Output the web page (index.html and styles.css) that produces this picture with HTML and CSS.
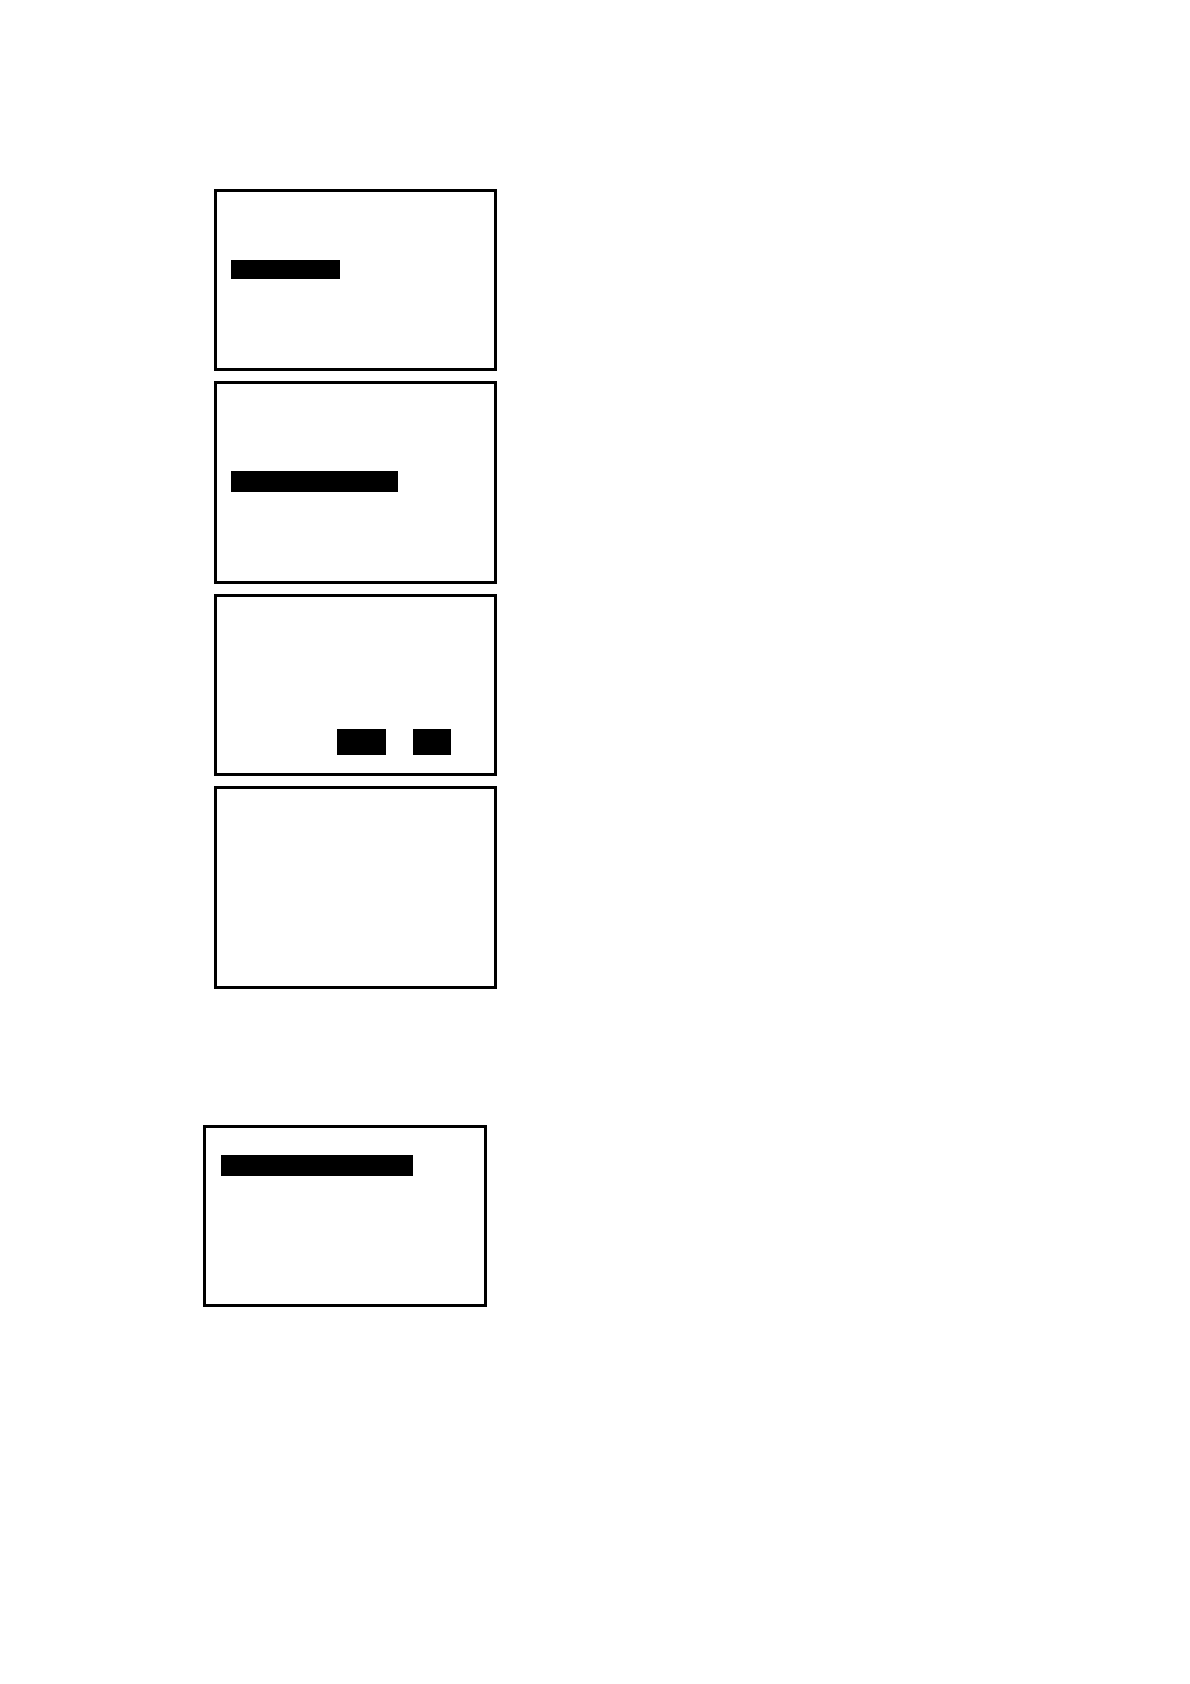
FILE: index.html
```html
<!DOCTYPE html>
<html lang="en">
<head>
<meta charset="utf-8">
<meta name="viewport" content="width=device-width, initial-scale=1">
<link rel="stylesheet" href="styles.css">
</head>
<body>
<main class="page">
  <section class="stack stack-indented">
    <div class="screen screen-second-row">
      <div class="bar bar-short"></div>
    </div>
    <div class="screen screen-tall screen-third-row">
      <div class="bar bar-medium"></div>
    </div>
    <div class="screen screen-choices">
      <div class="choice choice-wide"></div>
      <div class="choice"></div>
    </div>
    <div class="screen screen-tall"></div>
  </section>
  <section class="stack">
    <div class="screen screen-first-row">
      <div class="bar bar-long"></div>
    </div>
  </section>
</main>
</body>
</html>
```
FILE: styles.css
```css
* {
  box-sizing: border-box;
}

body {
  margin: 0;
  background: #fff;
  font-family: "Liberation Sans", Arial, sans-serif;
}

.page {
  display: flex;
  flex-direction: column;
  gap: 136px;
  min-height: 100vh;
  padding: 189px 24px 24px 203px;
}

.stack {
  display: flex;
  flex-direction: column;
  gap: 10px;
}

.stack-indented {
  padding-left: 11px;
}

/* Outlined display panels */
.screen {
  width: 100%;
  max-width: 283px;
  min-height: 182px;
  padding: 0 14px;
  border: 3px solid #000;
}

.screen-tall {
  min-height: 203px;
}

.screen-first-row {
  max-width: 284px;
  padding: 27px 15px;
}

.screen-second-row {
  padding-top: 68px;
}

.screen-third-row {
  padding-top: 87px;
}

.screen-choices {
  display: flex;
  align-items: flex-end;
  justify-content: flex-end;
  gap: 27px;
  padding: 18px 43px 18px 14px;
}

/* Highlighted rows */
.bar {
  height: 21px;
  max-width: 100%;
  background: #000;
}

.bar-short {
  width: 109px;
  height: 19px;
}

.bar-medium {
  width: 167px;
}

.bar-long {
  width: 192px;
}

.choice {
  width: 38px;
  height: 26px;
  background: #000;
}

.choice-wide {
  width: 49px;
}
```
